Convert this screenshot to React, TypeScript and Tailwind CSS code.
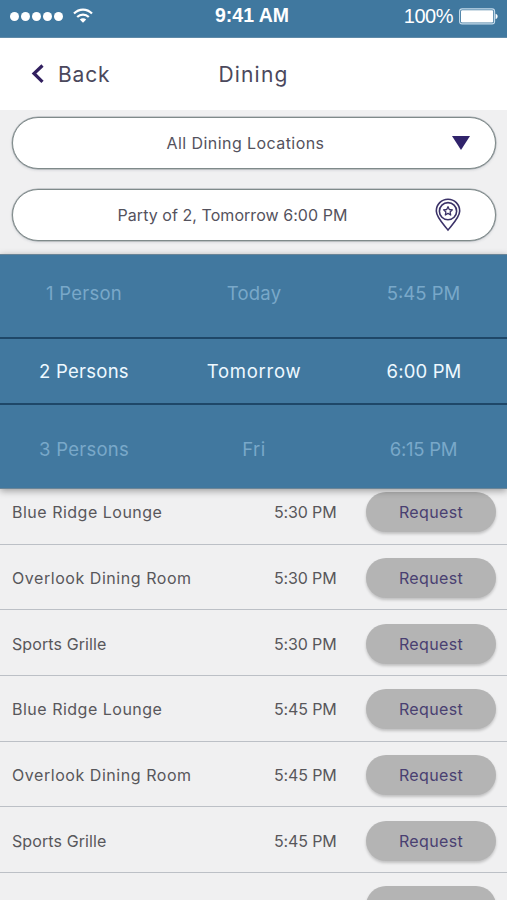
import React from 'react';

type Slot = { place: string; time: string; placeClass: string };

const LOUNGE = { place: 'Blue Ridge Lounge', placeClass: 'tracking-[0.5px]' };
const OVERLOOK = { place: 'Overlook Dining Room', placeClass: 'tracking-[0.55px]' };
const GRILLE = { place: 'Sports Grille', placeClass: 'tracking-[0.1px]' };

const slots: Slot[] = [
  { ...LOUNGE, time: '5:30 PM' },
  { ...OVERLOOK, time: '5:30 PM' },
  { ...GRILLE, time: '5:30 PM' },
  { ...LOUNGE, time: '5:45 PM' },
  { ...OVERLOOK, time: '5:45 PM' },
  { ...GRILLE, time: '5:45 PM' },
];

const StatusBar: React.FC = () => (
  <div className="h-[38px] shrink-0 bg-[#40789f] border-b border-[#5f8aa8] grid grid-cols-3 items-center pl-[10px] pr-[9px] pb-[5px] text-white font-['Liberation_Sans',sans-serif]">
    <div className="flex items-center gap-[10px]">
      <div className="flex gap-[2px]">
        {[0, 1, 2, 3, 4].map((i) => (
          <span key={i} className="w-[9px] h-[9px] rounded-full bg-white" />
        ))}
      </div>
      <svg width="20" height="16" viewBox="0 0 20 16" fill="none" stroke="white" strokeWidth="2.2">
        <path d="M1 5.6C6 0.4 14 0.4 19 5.6" />
        <path d="M4.2 9C7.4 5.8 12.6 5.8 15.8 9" />
        <path d="M6.8 11.4C8.6 9.7 11.4 9.7 13.2 11.4L10 14.8Z" fill="white" stroke="none" />
      </svg>
    </div>
    <div className="pr-[4px] text-center text-[19.5px] leading-none font-bold whitespace-nowrap">9:41 AM</div>
    <div className="flex items-center justify-end gap-[6px]">
      <span className="text-[20px] leading-none tracking-[-0.5px]">100%</span>
      <svg width="39" height="17" viewBox="0 0 39 17">
        <rect x="0.6" y="0.9" width="35" height="15" rx="2.5" fill="none" stroke="#c5dcec" strokeWidth="1.1" />
        <rect x="2" y="2.3" width="32.2" height="12.2" rx="1.2" fill="white" />
        <path d="M36.6 5.8C39.3 6.6 39.3 10.2 36.6 11Z" fill="white" />
      </svg>
    </div>
  </div>
);

const PinIcon: React.FC = () => (
  <svg width="28" height="34" viewBox="0 0 28 34" fill="none" stroke="#3b3268" strokeWidth="1.6">
    <path d="M14 32C11 28 2.3 19.5 2.3 13C2.3 6.3 7.5 1.3 14 1.3S25.7 6.3 25.7 13C25.7 19.5 17 28 14 32Z" />
    <circle cx="14" cy="13.2" r="8.6" />
    <path
      d="M14 8.7L15.3 11.5L18.4 11.8L16.1 13.9L16.7 17L14 15.4L11.3 17L11.9 13.9L9.6 11.8L12.7 11.5Z"
      strokeWidth="1.3"
      strokeLinejoin="round"
    />
  </svg>
);

const pill =
  'h-[52px] rounded-full bg-white border border-[#7f8a8a] shadow-[0_0_0_0.5px_rgba(120,130,135,0.6),0_1px_3px_rgba(60,70,90,0.2)] flex items-center text-[#54525d] text-[16px]';

const requestButton =
  'w-[130px] h-[40px] rounded-full bg-[#b4b4b4] text-[#494071] tracking-[0.35px] shadow-[0_2px_3px_rgba(0,0,0,0.2)]';

const App: React.FC = () => {
  return (
    <div className="w-[507px] h-[900px] overflow-hidden flex flex-col bg-[#f0f0f1] font-['Inter','Liberation_Sans',sans-serif] whitespace-nowrap">
      <StatusBar />

      <header className="h-[72px] shrink-0 bg-white grid grid-cols-3 items-center pt-[2px] text-[#4b485c] text-[21px]">
        <div className="flex items-center pl-[30px] gap-[13px]">
          <svg className="-mt-[3px]" width="15" height="20" viewBox="0 0 15 20" fill="none" stroke="#32205f" strokeWidth="3.2">
            <path d="M12.5 1.5L4 9.5L12.5 17.8" />
          </svg>
          <span className="tracking-[0.8px]">Back</span>
        </div>
        <h1 className="text-center tracking-[1.2px]">Dining</h1>
      </header>

      <div className="h-[144px] shrink-0 pl-[12px] pr-[11px] pt-[7px] flex flex-col gap-5">
        <div className={pill}>
          <span className="flex-1 text-center pl-[26px] tracking-[0.43px]">All Dining Locations</span>
          <svg className="mr-[25px]" width="18" height="14" viewBox="0 0 18 14">
            <path d="M0 0H18L9 14Z" fill="#30236b" />
          </svg>
        </div>
        <div className={pill}>
          <span className="flex-1 text-center pl-[18px] tracking-[0.05px]">Party of 2, Tomorrow 6:00 PM</span>
          <div className="mr-[33px]">
            <PinIcon />
          </div>
        </div>
      </div>

      {/* Party size / day / time wheel */}
      <div className="relative z-10 h-[235px] shrink-0 bg-[#41789f] border-y border-[#6b8597] shadow-[0_2px_7px_rgba(0,0,0,0.35)] flex flex-col text-[18.5px] text-center text-[#79a8c9]">
        <div className="h-[82px] grid grid-cols-[168px_172px_167px] items-center pb-[4px]">
          <span className="tracking-[0.25px]">1 Person</span>
          <span className="tracking-[0.25px]">Today</span>
          <span>5:45 PM</span>
        </div>
        <div className="h-[68px] grid grid-cols-[168px_172px_168px] items-center pt-[2px] border-y-[2.5px] border-[#1e4768] text-[#eef9ff]">
          <span className="tracking-[0.25px]">2 Persons</span>
          <span className="tracking-[0.75px]">Tomorrow</span>
          <span className="tracking-[0.15px]">6:00 PM</span>
        </div>
        <div className="h-[83px] grid grid-cols-[168px_172px_167px] items-center pt-[6px]">
          <span className="tracking-[0.25px]">3 Persons</span>
          <span className="tracking-[0.4px]">Fri</span>
          <span className="tracking-[-0.25px]">6:15 PM</span>
        </div>
      </div>

      <div className="-mt-[10px] flex flex-col text-[16px] text-[#58575b]">
        {slots.map((slot, idx) => (
          <div
            key={idx}
            className="h-[65.7px] shrink-0 flex items-center pl-[12px] pr-[11px] pt-[1.6px] border-b border-[#bcc0c6]"
          >
            <span className={`flex-1 ${slot.placeClass}`}>{slot.place}</span>
            <span className="w-[92px] tracking-[-0.15px]">{slot.time}</span>
            <button type="button" className={requestButton}>
              Request
            </button>
          </div>
        ))}
        {/* next row, only the top of its button is scrolled into view */}
        <div className="h-[65.7px] shrink-0 flex items-center justify-end pr-[11px] pt-[1px]">
          <button type="button" aria-label="Request" className={requestButton} />
        </div>
      </div>
    </div>
  );
};

export default App;
